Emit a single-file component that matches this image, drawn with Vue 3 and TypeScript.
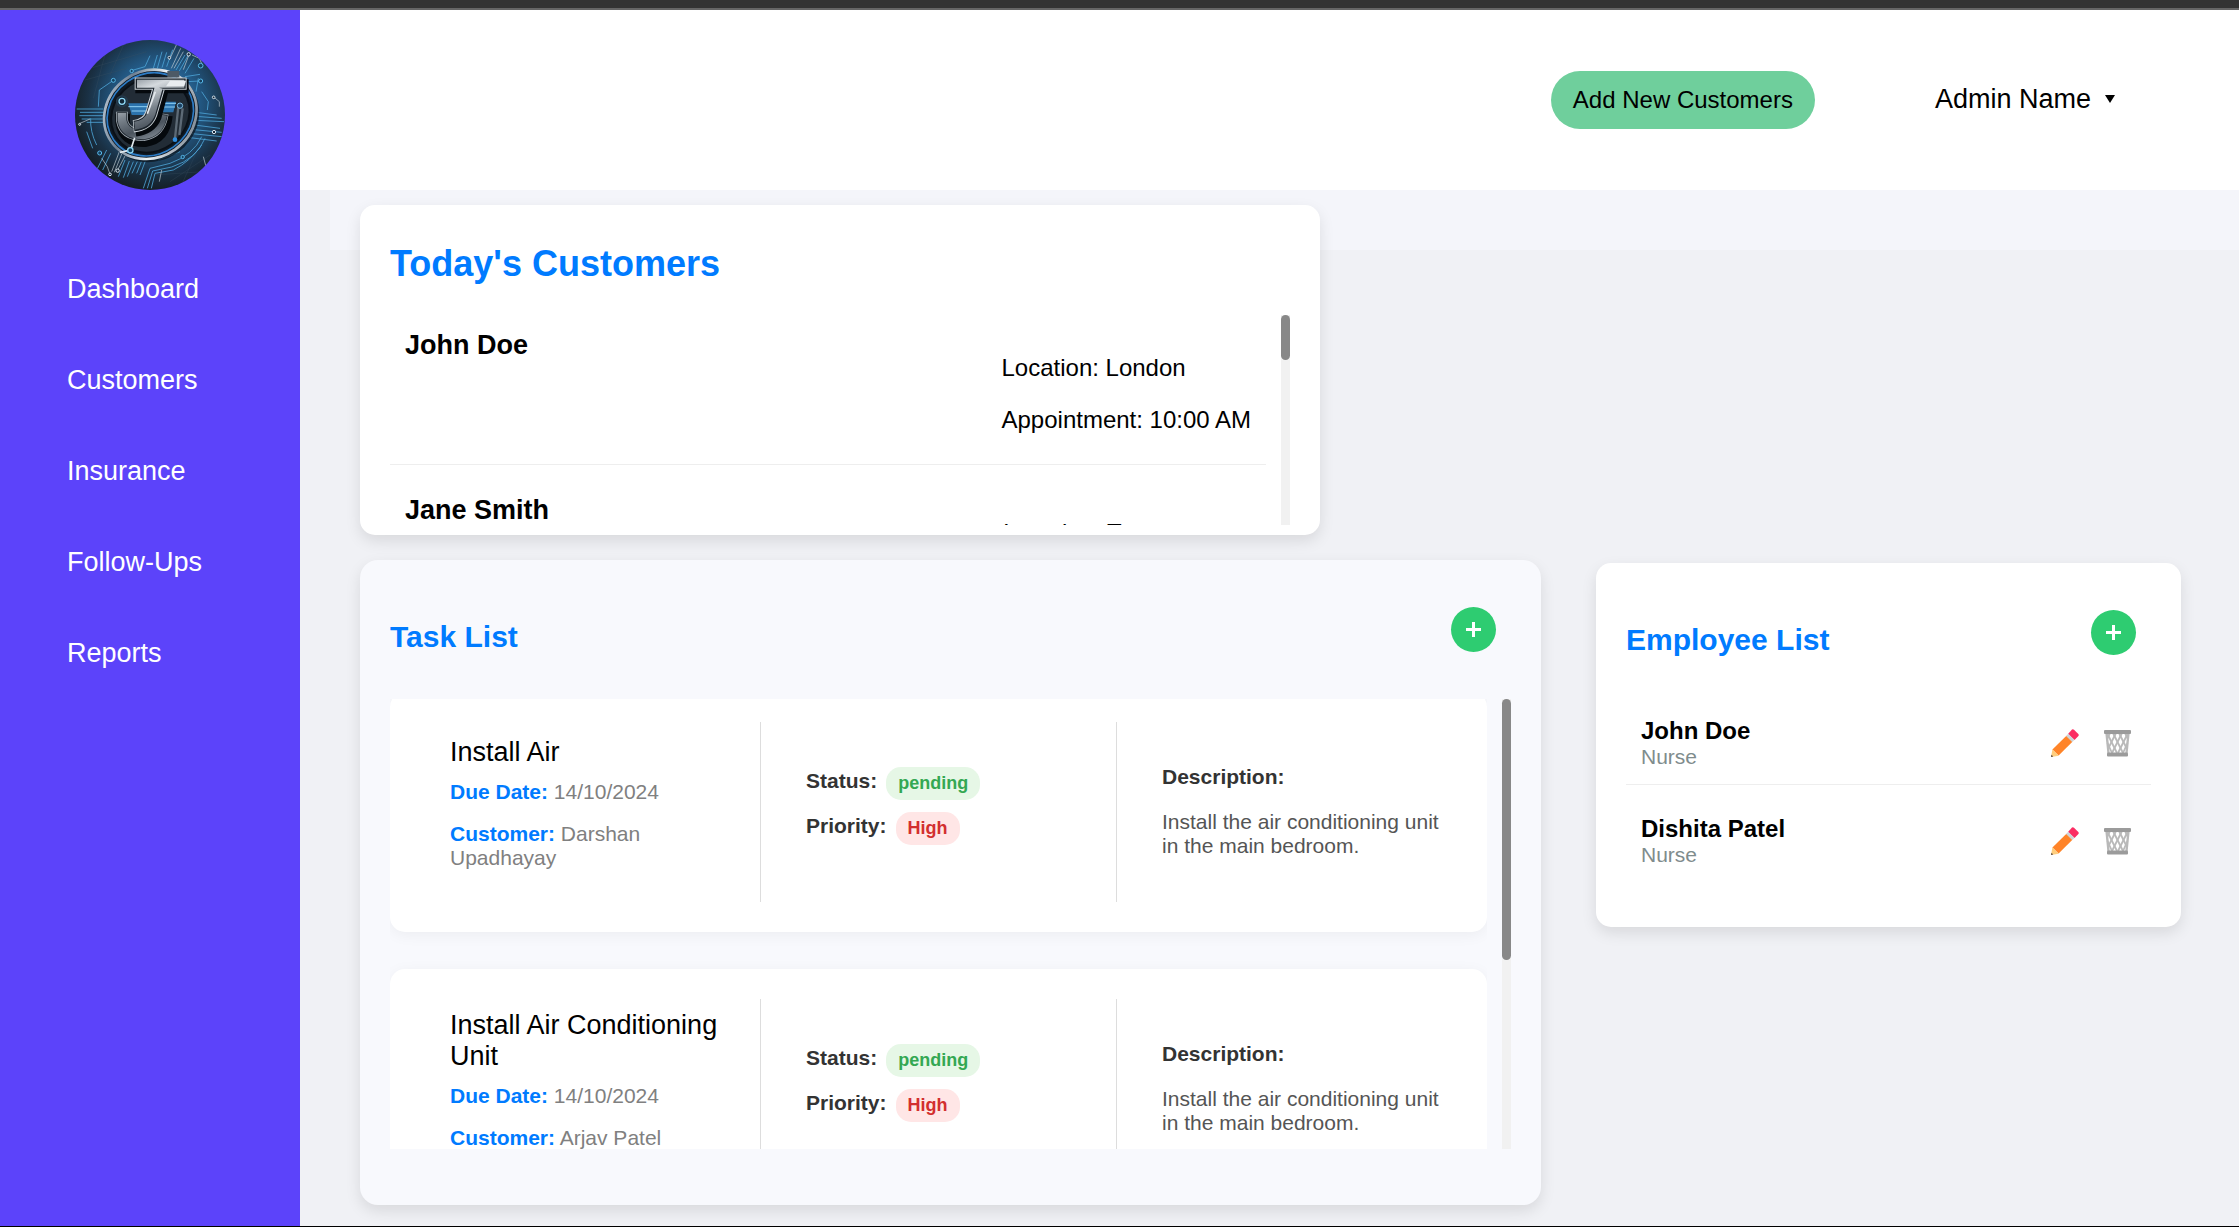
<script setup lang="ts">
interface Customer {
  name: string
  location: string
  time: string
}

interface Task {
  title: string
  due: string
  customer: string
  status: string
  priority: string
  description: string
}

interface Employee {
  name: string
  role: string
}

const links: string[] = ['Dashboard', 'Customers', 'Insurance', 'Follow-Ups', 'Reports']

const customers: Customer[] = [
  { name: 'John Doe', location: 'London', time: '10:00 AM' },
  { name: 'Jane Smith', location: 'Toronto', time: '11:00 AM' },
]

const description = 'Install the air conditioning unit in the main bedroom.'

const tasks: Task[] = [
  { title: 'Install Air', due: '14/10/2024', customer: 'Darshan Upadhayay', status: 'pending', priority: 'High', description },
  { title: 'Install Air Conditioning Unit', due: '14/10/2024', customer: 'Arjav Patel', status: 'pending', priority: 'High', description },
]

const employees: Employee[] = [
  { name: 'John Doe', role: 'Nurse' },
  { name: 'Dishita Patel', role: 'Nurse' },
]

const customerShare = 21.4
const taskShare = 58
</script>

<template>
  <div class="app">
    <aside class="sidebar">
      <svg class="logo" viewBox="15 15 450 450" aria-label="Company logo" role="img">
        <defs>
          <radialGradient id="disc" cx="0.55" cy="0.42" r="0.58">
            <stop offset="0" stop-color="#3a8fd6" />
            <stop offset="0.5" stop-color="#225680" />
            <stop offset="0.8" stop-color="#1a3145" />
            <stop offset="1" stop-color="#151f27" />
          </radialGradient>
          <linearGradient id="ring" x1="0" y1="0" x2="1" y2="1">
            <stop offset="0" stop-color="#dfe9f2" />
            <stop offset="0.3" stop-color="#6d7f92" />
            <stop offset="0.55" stop-color="#eef4f8" />
            <stop offset="1" stop-color="#5a6673" />
          </linearGradient>
          <linearGradient id="steel" gradientUnits="userSpaceOnUse" x1="190" y1="130" x2="260" y2="320">
            <stop offset="0" stop-color="#8c949c" />
            <stop offset="0.2" stop-color="#d5dade" />
            <stop offset="0.5" stop-color="#7c858e" />
            <stop offset="0.75" stop-color="#4b545e" />
            <stop offset="1" stop-color="#8d969f" />
          </linearGradient>
          <clipPath id="round"><circle cx="240" cy="240" r="225" /></clipPath>
        </defs>
        <g clip-path="url(#round)" fill="none">
          <rect x="15" y="15" width="450" height="450" fill="url(#disc)" />
          <g stroke="#3b5060" stroke-width="1.5" opacity="0.6">
            <path d="M60 100L230 50M45 135L170 100M110 40L70 190M165 20L120 120M300 440L420 360M330 460L380 350M250 420L400 410" />
          </g>
          <g stroke="#4da3d6" stroke-width="2.5">
            <path d="M187 106L225 95L240 62M130 136L88 165L85 215M250 100L262 60M262 100L276 50M276 98L290 52M290 95L308 44M318 105L345 60M328 108L356 58M345 115L372 70" />
            <path d="M20 222H100M30 232H102M28 242H100M35 252H98M50 262H100M378 232L440 240M378 244L455 250M376 256L462 260M374 270L450 280M372 284L455 292M366 296L455 305M360 308L440 318" />
            <path d="M62 250Q60 290 80 330M50 290L68 340M110 345L80 405M122 355L98 405M165 375L145 425M178 378L160 428M190 380L172 425M202 380L186 415M214 380L200 415M226 378L210 420" />
            <path d="M395 305Q370 360 300 385L240 400L220 460M405 310Q380 372 305 396L248 408L232 460M395 330Q360 380 310 405L255 415L244 460M265 375L330 350" />
            <path d="M345 125L390 118M352 140L388 138M385 130L378 170M395 170L415 200L412 225" />
          </g>
          <g stroke="#c3ced6" stroke-width="2">
            <path d="M298 75L320 28M304 100L332 40M312 100L340 50M340 104L356 62M366 60L388 70L396 88M430 185L448 200V215M95 370L112 395L120 418M125 410L150 345M133 412L158 350M143 405L172 350M400 365L408 395M268 440L275 405M30 265L60 252" />
          </g>
          <g fill="#16283a" stroke="#d6e2ea" stroke-width="3">
            <circle cx="356" cy="58" r="5" /><circle cx="298" cy="68" r="4" /><circle cx="431" cy="187" r="4" />
            <circle cx="432" cy="291" r="5" /><circle cx="120" cy="418" r="4" /><circle cx="143" cy="407" r="5" />
            <circle cx="29" cy="268" r="3" />
          </g>
          <g fill="#16415f" stroke="#58b7e8" stroke-width="3">
            <circle cx="392" cy="92" r="7" /><circle cx="392" cy="138" r="6" /><circle cx="89" cy="354" r="6" />
            <circle cx="130" cy="136" r="6" /><circle cx="185" cy="108" r="5" /><circle cx="338" cy="366" r="5" />
          </g>

          <ellipse cx="246" cy="244" rx="146" ry="133" transform="rotate(-35 246 244)" fill="#0b141d" opacity="0.75" />
          <ellipse cx="241" cy="238" rx="143" ry="129" transform="rotate(-35 241 238)" fill="#101a24" stroke="url(#ring)" stroke-width="8" />
          <ellipse cx="241" cy="238" rx="134" ry="120" transform="rotate(-35 241 238)" stroke="#2d7cc6" stroke-width="5" />
          <ellipse cx="241" cy="240" rx="122" ry="108" transform="rotate(-35 241 240)" fill="#222c36" stroke="#0a1017" stroke-width="6" />
          <path d="M175 205H235L225 240H185ZM272 200H318L310 232H268Z" fill="#2f86cc" opacity="0.8" />
          <path d="M175 215H240M185 228H230M275 205H318M280 216H315" stroke="#8fd0f5" stroke-width="3" />
          <path d="M325 215L315 310M338 220L328 300" stroke="#5d6a76" stroke-width="7" />
          <rect x="292" y="108" width="36" height="20" fill="#4d5a66" />
          <circle cx="330" cy="212" r="8" fill="#1c4263" stroke="#7db9dd" stroke-width="3" />
          <circle cx="315" cy="314" r="7" fill="#2f8ee0" />
          <circle cx="156" cy="199" r="16" fill="#122838" stroke="#24394a" stroke-width="5" />
          <circle cx="156" cy="199" r="9" stroke="#8fd6f4" stroke-width="4" />

          <g stroke-linejoin="miter">
            <path d="M158 236V262Q165 316 225 314Q280 306 286 242" stroke="#05090d" stroke-width="44" />
            <path d="M156 230V256Q164 300 220 300Q270 292 278 236" stroke="#9aa3ab" stroke-width="36" />
            <path d="M156 232V256Q164 300 220 300Q270 292 278 238" stroke="#1d252d" stroke-width="31" />
            <path d="M156 234V256Q164 300 220 300Q270 292 278 240" stroke="url(#steel)" stroke-width="26" />
            <path d="M196 154H356M276 160L254 244Q240 278 196 284" stroke="#05090d" stroke-width="42" />
            <path d="M194 146H350M266 160L244 236Q232 270 190 274" stroke="#c9d0d6" stroke-width="37" />
            <path d="M197 146H347M266 160L244 236Q232 270 192 273" stroke="#1b232b" stroke-width="31" />
            <path d="M201 146H343M266 158L244 236Q232 268 194 272" stroke="url(#steel)" stroke-width="24" />
            <path d="M300 137H348L343 154H288Z" fill="#e9edf0" />
            <path d="M256 170L232 236" stroke="#e4e9ed" stroke-width="5" />
          </g>
          <path d="M194 308L182 345L150 352" stroke="#e0e7ec" stroke-width="5" />
          <circle cx="181" cy="346" r="8" fill="#15425f" stroke="#8ad3f3" stroke-width="4" />
        </g>
      </svg>
      <nav class="nav">
        <a v-for="link in links" :key="link" href="#">{{ link }}</a>
      </nav>
    </aside>

    <main class="main">
      <header class="header">
        <button class="add-customer" type="button">Add New Customers</button>
        <button class="account" type="button">
          Admin Name
          <svg width="10" height="8" viewBox="0 0 10 8" aria-hidden="true"><path d="M0 0H10L5 8Z" /></svg>
        </button>
      </header>

      <div class="content">
        <section class="card customers">
          <h1>Today's Customers</h1>
          <div class="scroll-area">
            <ul class="scroll customer-list">
              <li v-for="c in customers" :key="c.name">
                <h3>{{ c.name }}</h3>
                <div class="details">
                  <p>Location: {{ c.location }}</p>
                  <p>Appointment: {{ c.time }}</p>
                </div>
              </li>
            </ul>
            <div class="track"><div class="thumb" :style="{ height: customerShare + '%' }"></div></div>
          </div>
        </section>

        <div class="columns">
          <section class="card tasks">
            <div class="card-head">
              <h2>Task List</h2>
              <button class="plus" type="button" aria-label="Add task">
                <svg width="15" height="15" viewBox="0 0 15 15"><path d="M0 6H6V0H9V6H15V9H9V15H6V9H0Z" /></svg>
              </button>
            </div>
            <div class="scroll-area">
              <div class="scroll task-list">
                <article v-for="t in tasks" :key="t.title" class="task">
                  <div class="col">
                    <h3>{{ t.title }}</h3>
                    <p><strong>Due Date:</strong> {{ t.due }}</p>
                    <p><strong>Customer:</strong> {{ t.customer }}</p>
                  </div>
                  <div class="col">
                    <div class="tag-row"><b>Status:</b><span class="tag green">{{ t.status }}</span></div>
                    <div class="tag-row"><b>Priority:</b><span class="tag red">{{ t.priority }}</span></div>
                  </div>
                  <div class="col about">
                    <b>Description:</b>
                    <span>{{ t.description }}</span>
                  </div>
                </article>
              </div>
              <div class="track"><div class="thumb" :style="{ height: taskShare + '%' }"></div></div>
            </div>
          </section>

          <section class="card employees">
            <div class="card-head">
              <h2>Employee List</h2>
              <button class="plus" type="button" aria-label="Add employee">
                <svg width="15" height="15" viewBox="0 0 15 15"><path d="M0 6H6V0H9V6H15V9H9V15H6V9H0Z" /></svg>
              </button>
            </div>
            <ul class="employee-list">
              <li v-for="e in employees" :key="e.name">
                <div>
                  <strong>{{ e.name }}</strong>
                  <span>{{ e.role }}</span>
                </div>
                <div class="actions">
                  <button type="button" :aria-label="`Edit ${e.name}`">
                    <svg width="28" height="28" viewBox="0 0 28 28">
                      <path d="M21 0.5Q22 -0.3 23 0.7L27.3 5Q28.2 6 27.4 7L23.5 11L17 5Z" fill="#fb2d63" />
                      <path d="M17.3 4.8L23.4 10.9L21 13.2L15 7.1Z" fill="#cfd3d6" />
                      <path d="M15.2 7L21.2 13L7.6 26.6L1.4 20.6Z" fill="#ff8429" />
                      <path d="M1.4 20.4L7.8 26.7L0 28Z" fill="#ffce7d" />
                      <path d="M0.5 25.8L2.2 27.6L0 28Z" fill="#4a4140" />
                    </svg>
                  </button>
                  <button type="button" :aria-label="`Delete ${e.name}`">
                    <svg width="27" height="28" viewBox="0 0 27 28">
                      <g fill="none" stroke="#b9b9b9" stroke-width="1.8">
                        <path d="M2.5 4L4.5 24M24.5 4L22.5 24" stroke-width="2.4" />
                        <path d="M3 4L13 24M9 4L19 24M15 4L22.5 19M21 4L24 10M3.5 14L8 24" />
                        <path d="M24 4L14 24M18 4L8 24M12 4L4.5 19M6 4L3 10M23.5 14L19 24" />
                      </g>
                      <rect x="0" y="1" width="27" height="4" rx="1" fill="#9b9b9b" />
                      <rect x="3" y="23.5" width="21" height="4" rx="1" fill="#9b9b9b" />
                    </svg>
                  </button>
                </div>
              </li>
            </ul>
          </section>
        </div>
      </div>
    </main>
  </div>
</template>

<style>
body {
  margin: 0;
  background: #f0f1f5;
}
</style>

<style scoped>
* {
  box-sizing: border-box;
}

.app {
  display: flex;
  min-height: 100vh;
  border-top: 8px solid #333;
  border-bottom: 1px solid #000;
  background: #f0f1f5;
  font-family: 'Liberation Sans', Arial, sans-serif;
  color: #000;
}

h1,
h2,
h3,
p,
ul {
  margin: 0;
  padding: 0;
}

ul {
  list-style: none;
}

button {
  border: 0;
  padding: 0;
  background: none;
  font-family: inherit;
  color: inherit;
  cursor: pointer;
}

svg {
  display: block;
}

.sidebar {
  flex: 0 0 300px;
  border-top: 2px solid #666;
  padding-top: 30px;
  background: #5c43fa;
}

.logo {
  width: 150px;
  height: 150px;
  margin: 0 auto;
}

.nav {
  display: flex;
  flex-direction: column;
  gap: 60px;
  padding: 84px 67px 0;
}

.nav a {
  font-size: 27px;
  line-height: 31px;
  color: #fff;
  text-decoration: none;
}

.main {
  flex: 1;
  min-width: 0;
  border-top: 2px solid #666;
}

.header {
  display: flex;
  align-items: center;
  justify-content: flex-end;
  gap: 120px;
  height: 180px;
  padding-right: 124px;
  background: #fff;
}

.add-customer {
  padding: 15px 22px;
  border-radius: 30px;
  background: #6fcf9c;
  font-size: 24px;
  line-height: 28px;
}

.account {
  display: flex;
  align-items: center;
  gap: 14px;
  padding-bottom: 2px;
  font-size: 27px;
  line-height: 31px;
}

.content {
  margin-left: 30px;
  padding: 15px 58px 21px 30px;
  background: linear-gradient(#f4f5fa, #f4f5fa) no-repeat 0 0 / 100% 60px;
}

.card {
  border-radius: 15px;
  background: #fff;
  box-shadow: 0 6px 15px rgba(0, 0, 0, 0.1);
}

h1,
h2 {
  color: #007bff;
  font-weight: bold;
}

h1 {
  font-size: 36px;
  line-height: 41px;
}

h2 {
  font-size: 30px;
  line-height: 34px;
}

.scroll-area {
  display: flex;
  gap: 15px;
}

.scroll {
  flex: 1;
  min-width: 0;
  overflow-y: auto;
  scrollbar-width: none;
}

.track {
  flex: 0 0 9px;
  background: #f1f1f1;
}

.thumb {
  border-radius: 5px;
  background: #888;
}

.customers {
  max-width: 960px;
  padding: 38px 30px 10px;
}

.customers .scroll-area {
  margin-top: 31px;
}

.customer-list {
  max-height: 210px;
}

.customer-list li {
  display: flex;
  justify-content: space-between;
  padding: 15px 15px 6px;
  border-bottom: 1px solid #eee;
}

.customer-list li + li {
  margin-top: 15px;
}

.customer-list h3 {
  font-size: 27px;
  line-height: 31px;
}

.details p {
  margin: 25px 0;
  font-size: 24px;
  line-height: 27px;
}

.details p:first-child {
  margin-top: 24px;
}

.columns {
  display: flex;
  align-items: flex-start;
  gap: 55px;
  margin-top: 25px;
}

.card-head {
  display: flex;
  align-items: flex-start;
  justify-content: space-between;
  padding: 17px 15px 0 0;
}

.card-head h2 {
  padding-top: 13px;
}

.plus {
  display: flex;
  align-items: center;
  justify-content: center;
  width: 45px;
  height: 45px;
  border-radius: 50%;
  background: #2ecc71;
}

.plus svg {
  fill: #fff;
}

.tasks {
  flex: 1;
  min-width: 0;
  padding: 30px 30px 56px;
  border-radius: 18px;
  background: #f8f9fd;
}

.tasks .scroll-area {
  margin-top: 45px;
}

.task-list {
  max-height: 450px;
}

.task {
  display: flex;
  min-height: 240px;
  padding: 30px 15px;
  border-radius: 15px;
  background: #fff;
  box-shadow: 0 3px 15px rgba(0, 0, 0, 0.05);
}

.task:first-child {
  margin-top: -7px;
}

.task + .task {
  margin-top: 37px;
}

.col {
  display: flex;
  flex: 1 1 0;
  min-width: 0;
  flex-direction: column;
  justify-content: center;
  padding: 0 30px 0 45px;
  font-size: 21px;
  line-height: 24px;
}

.col + .col {
  border-left: 1px solid #ddd;
}

.col h3 {
  margin-bottom: 12px;
  font-size: 27px;
  font-weight: normal;
  line-height: 31px;
}

.col p {
  margin-bottom: 18px;
  color: #808080;
}

.col p strong {
  color: #007bff;
}

.col b {
  color: #333;
}

.tag-row {
  display: flex;
  align-items: center;
  gap: 9px;
  margin-bottom: 12px;
}

.tag-row b {
  margin-bottom: 6px;
}

.tag {
  padding: 6px 12px;
  border-radius: 15px;
  font-size: 18px;
  font-weight: bold;
  line-height: 21px;
}

.green {
  background: #e6f7e6;
  color: #34a853;
}

.red {
  background: #ffe6e6;
  color: #d32f2f;
}

.about {
  gap: 21px;
  padding-bottom: 2px;
  color: #555;
}

.employees {
  flex: 0 0 585px;
  margin-top: 3px;
  padding: 30px 30px 45px;
}

.employee-list {
  margin-top: 45px;
}

.employee-list li {
  display: flex;
  align-items: center;
  justify-content: space-between;
  padding: 15px 20px 15px 15px;
}

.employee-list li + li {
  margin-top: 15px;
}

.employee-list li:not(:last-child) {
  border-bottom: 1px solid #eee;
}

.employee-list strong,
.employee-list span {
  display: block;
}

.employee-list strong {
  font-size: 24px;
  line-height: 28px;
}

.employee-list span {
  font-size: 21px;
  line-height: 24px;
  color: #7f8c8d;
}

.actions {
  display: flex;
  gap: 25px;
}
</style>
